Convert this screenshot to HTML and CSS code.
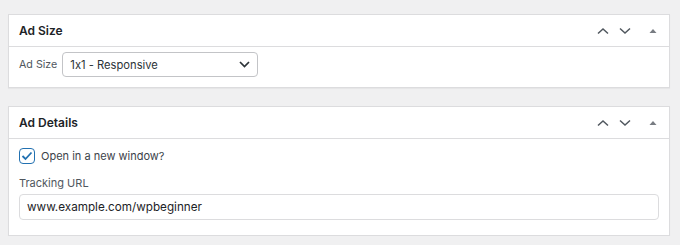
FILE: index.html
```html
<!DOCTYPE html>
<html>
<head>
<meta charset="utf-8">
<link rel="stylesheet" href="styles.css">
</head>
<body>
<div class="page">
  <section class="postbox">
    <div class="postbox-header">
      <h2 class="title">Ad Size</h2>
      <div class="actions">
        <svg class="ctrl" width="12" height="8" viewBox="0 0 12 8"><path d="M1 6.5 L6 2 L11 6.5" fill="none" stroke="#50575e" stroke-width="1.5"/></svg>
        <svg class="ctrl" width="12" height="8" viewBox="0 0 12 8"><path d="M1 1.5 L6 6 L11 1.5" fill="none" stroke="#50575e" stroke-width="1.5"/></svg>
        <svg class="tri" width="8" height="6" viewBox="0 0 8 6"><path d="M0.5 5 L4 1 L7.5 5 Z" fill="#787c82"/></svg>
      </div>
    </div>
    <div class="inside size-row">
      <label class="lbl">Ad Size</label>
      <div class="select">
        <span>1x1 - Responsive</span>
        <svg width="11" height="7" viewBox="0 0 11 7"><path d="M1 1 L5.5 5.5 L10 1" fill="none" stroke="#2c3338" stroke-width="1.7"/></svg>
      </div>
    </div>
  </section>
  <section class="postbox">
    <div class="postbox-header">
      <h2 class="title">Ad Details</h2>
      <div class="actions">
        <svg class="ctrl" width="12" height="8" viewBox="0 0 12 8"><path d="M1 6.5 L6 2 L11 6.5" fill="none" stroke="#50575e" stroke-width="1.5"/></svg>
        <svg class="ctrl" width="12" height="8" viewBox="0 0 12 8"><path d="M1 1.5 L6 6 L11 1.5" fill="none" stroke="#50575e" stroke-width="1.5"/></svg>
        <svg class="tri" width="8" height="6" viewBox="0 0 8 6"><path d="M0.5 5 L4 1 L7.5 5 Z" fill="#787c82"/></svg>
      </div>
    </div>
    <div class="inside details">
      <div class="check-row">
        <span class="checkbox"><svg width="12" height="10" viewBox="0 0 12 10"><path d="M1.5 5 L4.5 8 L10.5 1.5" fill="none" stroke="#2271b1" stroke-width="1.8"/></svg></span>
        <span class="check-text">Open in a new window?</span>
      </div>
      <div class="field-label">Tracking URL</div>
      <div class="input">www.example.com/wpbeginner</div>
    </div>
  </section>
</div>
</body>
</html>
```

FILE: styles.css
```css
html, body {
  margin: 0;
  padding: 0;
  background: #f0f0f1;
}
body {
  font-family: Inter, Roboto, "Liberation Sans", Arial, sans-serif;
  font-feature-settings: "calt" 0;
  color: #1d2327;
}
.page {
  padding: 14px 10px 0 8px;
  display: flex;
  flex-direction: column;
  gap: 18px;
}
.postbox {
  background: #fff;
  border: 1px solid #dcdcde;
  box-shadow: 0 1px 1px rgba(0,0,0,0.04);
}
.postbox-header {
  height: 31px;
  border-bottom: 1px solid #dcdcde;
  display: flex;
  align-items: center;
  justify-content: space-between;
  padding: 0 12px 0 10px;
}
.title {
  margin: 0;
  font-size: 12px;
  font-weight: 600;
  color: #1d2327;
}
.actions {
  display: flex;
  align-items: center;
}
.ctrl {
  display: block;
  margin-right: 10px;
}
.ctrl + .ctrl {
  margin-right: 18px;
}
.tri {
  display: block;
}
.inside {
  padding: 5px 10px 10px 10px;
}
.size-row {
  display: flex;
  align-items: center;
  gap: 5px;
}
.lbl {
  font-size: 10.7px;
  color: #50575e;
}
.select {
  width: 196px;
  height: 25px;
  box-sizing: border-box;
  border: 1px solid #c3c4c7;
  border-radius: 4px;
  display: flex;
  align-items: center;
  justify-content: space-between;
  padding: 0 7px 0 7px;
  font-size: 11.2px;
  color: #2c3338;
}
.details {
  padding: 9px 10px 15px 10px;
  display: flex;
  flex-direction: column;
}
.check-row {
  display: flex;
  align-items: center;
  gap: 6px;
}
.checkbox {
  width: 16px;
  height: 16px;
  box-sizing: border-box;
  border: 1.5px solid #2271b1;
  border-radius: 4px;
  display: flex;
  align-items: center;
  justify-content: center;
}
.check-text {
  font-size: 11px;
  color: #3c434a;
}
.field-label {
  font-size: 11px;
  line-height: 14px;
  color: #50575e;
  margin-top: 12px;
}
.input {
  margin-top: 4px;
  height: 26px;
  box-sizing: border-box;
  border: 1px solid #dcdcde;
  border-radius: 4px;
  display: flex;
  align-items: center;
  padding: 0 7px;
  font-size: 11.7px;
  color: #1d2327;
}
```
